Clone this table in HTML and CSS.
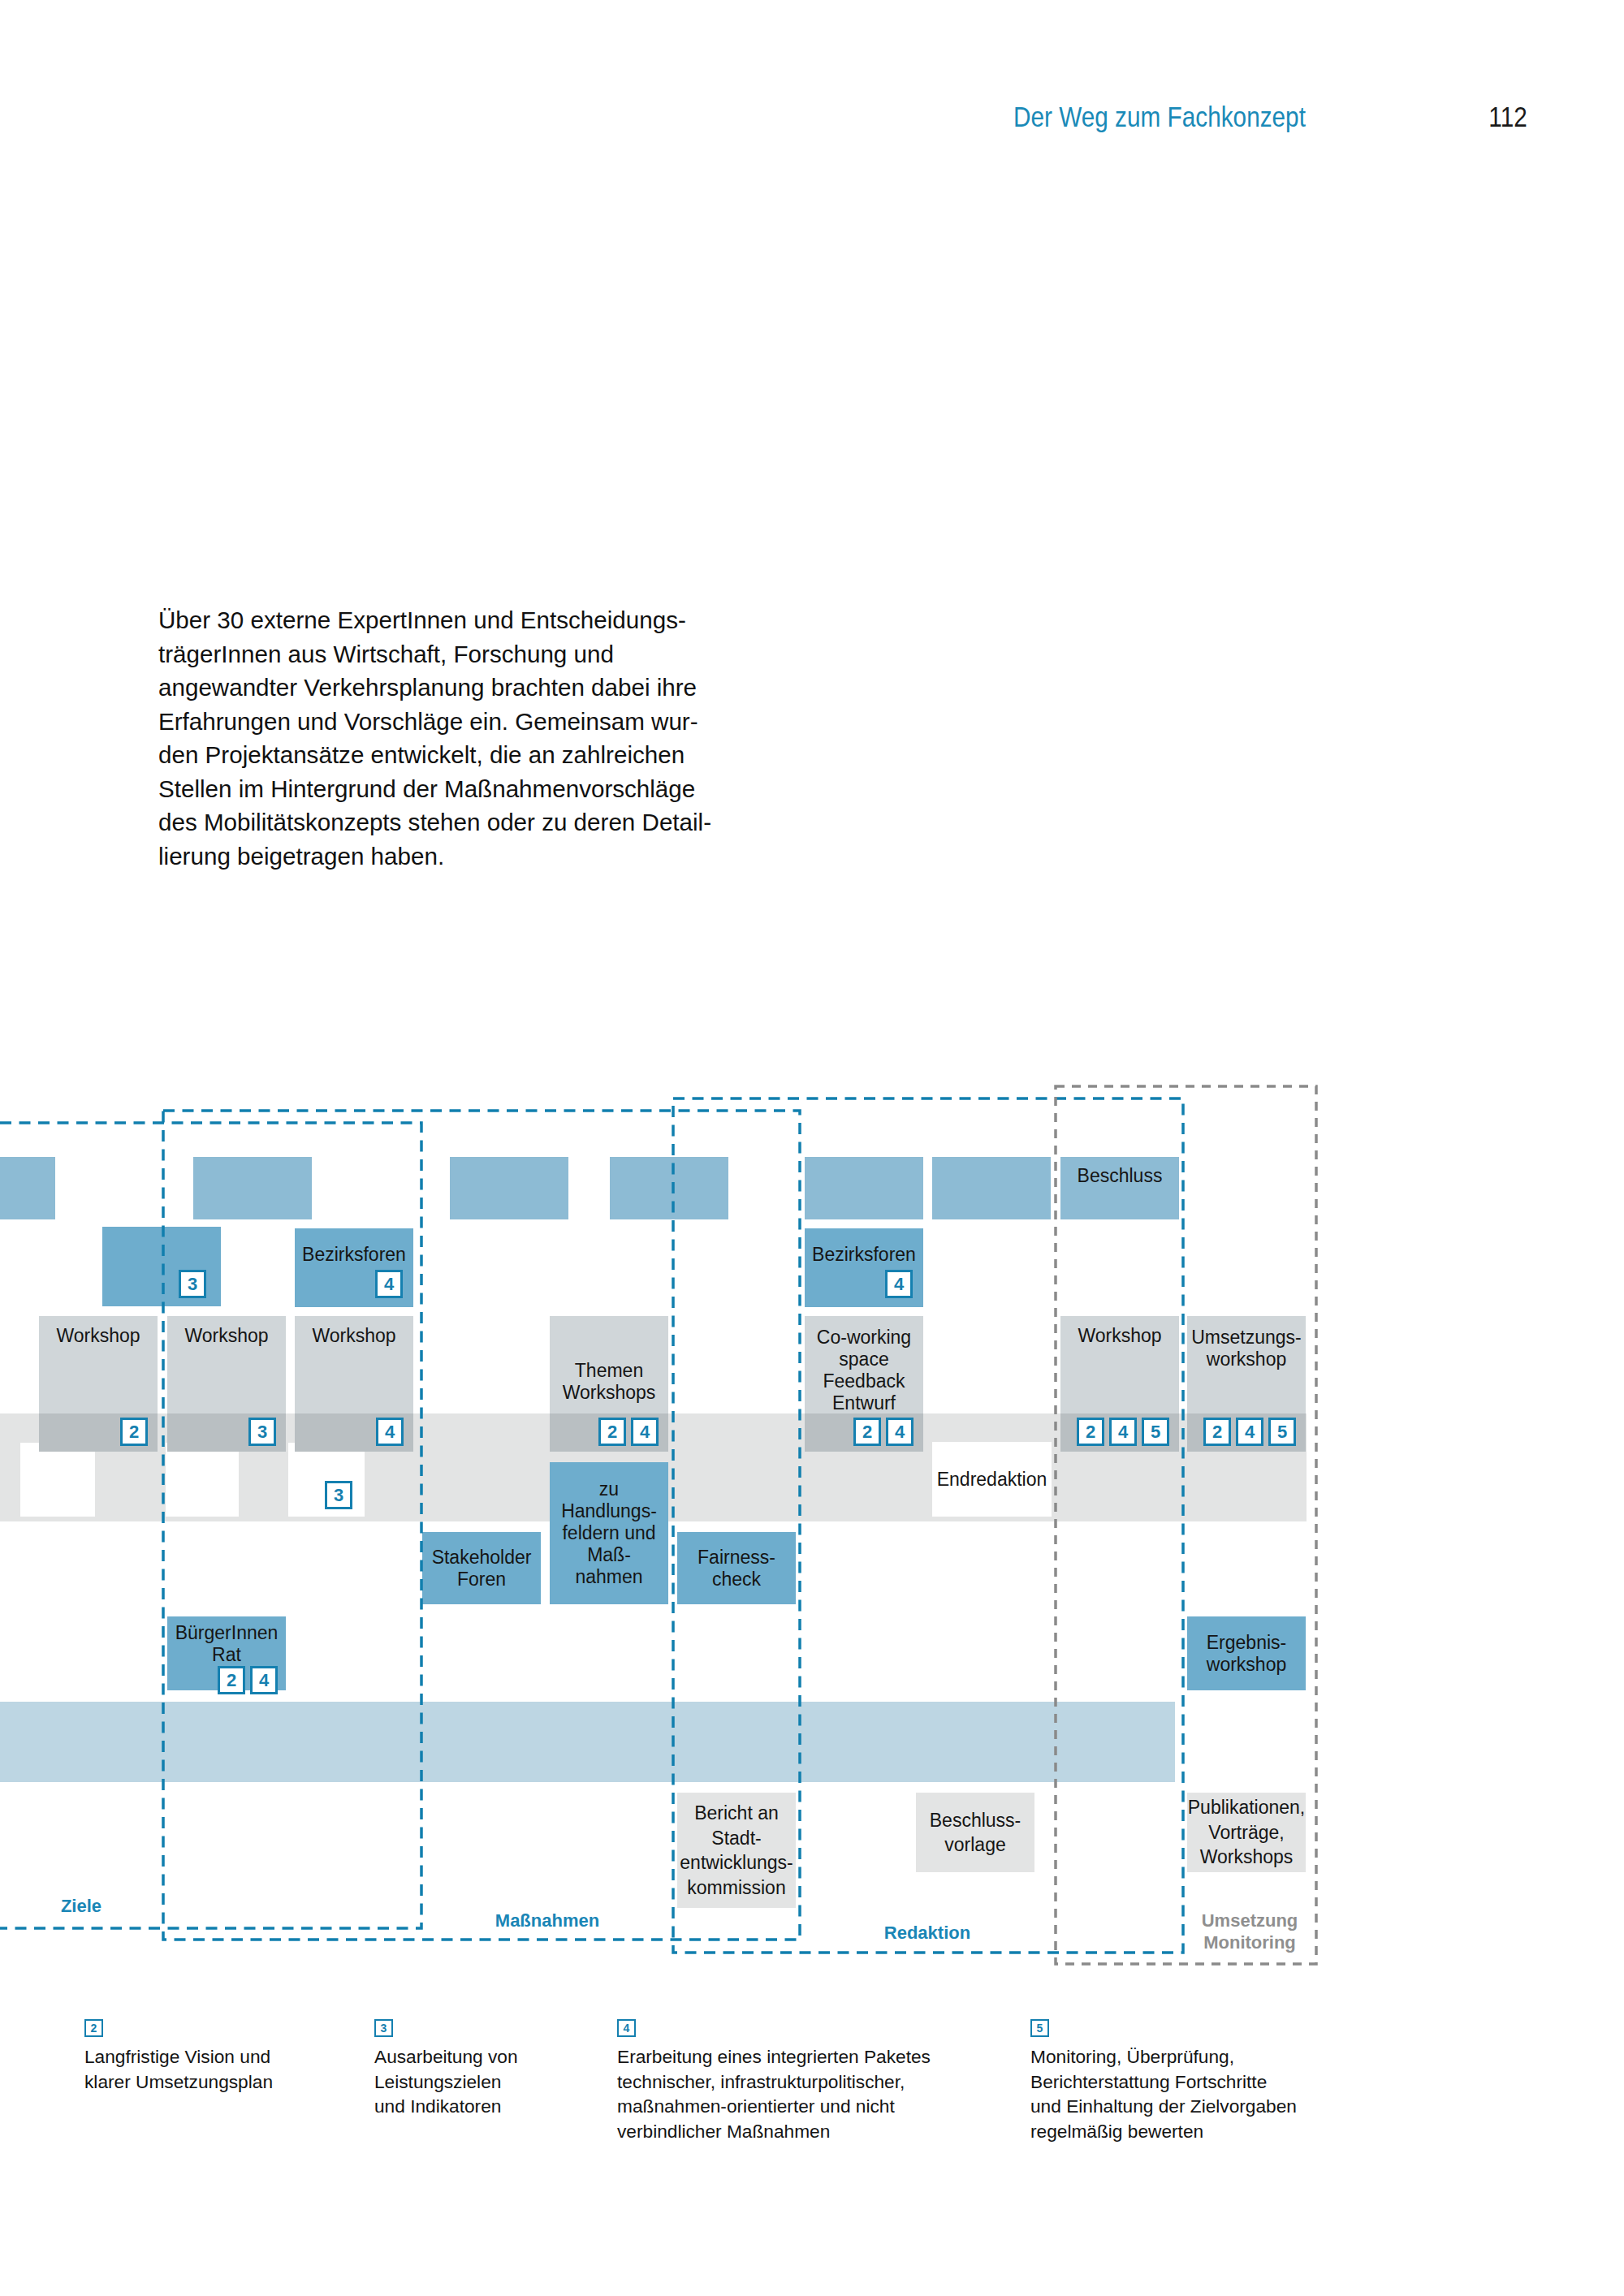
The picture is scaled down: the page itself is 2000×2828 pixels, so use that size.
FILE: index.html
```html
<!DOCTYPE html>
<html lang="de">
<head>
<meta charset="utf-8">
<title>Der Weg zum Fachkonzept – 112</title>
<link rel="stylesheet" href="styles.css">
</head>
<body>
<div class="page">
  <header class="running-head">
    <span class="chapter">Der Weg zum Fachkonzept</span>
    <span class="folio">112</span>
  </header>

  <p class="intro">Über 30 externe ExpertInnen und Entscheidungs-<br>trägerInnen aus Wirtschaft, Forschung und<br>angewandter Verkehrsplanung brachten dabei ihre<br>Erfahrungen und Vorschläge ein. Gemeinsam wur-<br>den Projektansätze entwickelt, die an zahlreichen<br>Stellen im Hintergrund der Maßnahmenvorschläge<br>des Mobilitätskonzepts stehen oder zu deren Detail-<br>lierung beigetragen haben.</p>

  <div class="diagram">
    <div class="band band-grey"></div>
    <div class="band band-blue"></div>

    <!-- top row -->
    <div class="node bar t-a"></div>
    <div class="node bar t-b"></div>
    <div class="node bar t-c"></div>
    <div class="node bar t-d"></div>
    <div class="node bar c6 r-top"></div>
    <div class="node bar c7 r-top"></div>
    <div class="node bar c8 r-top pad-besch"><span>Beschluss</span></div>

    <!-- second row -->
    <div class="node blue m-a"><div class="badges b-mid"><span class="badge">3</span></div></div>
    <div class="node blue c2 r-mid pad-bz"><span>Bezirksforen</span><div class="badges b-bz"><span class="badge">4</span></div></div>
    <div class="node blue c6 r-mid pad-bz"><span>Bezirksforen</span><div class="badges b-bz"><span class="badge">4</span></div></div>

    <!-- white boxes in grey band -->
    <div class="node white w-a"></div>
    <div class="node white w-b"></div>
    <div class="node white w-c"><div class="badges b-white"><span class="badge">3</span></div></div>
    <div class="node white c7 w-end center"><span>Endredaktion</span></div>

    <!-- workshops -->
    <div class="node grey c0 r-ws pad-ws"><span>Workshop</span><div class="badges"><span class="badge">2</span></div></div>
    <div class="node grey c1 r-ws pad-ws"><span>Workshop</span><div class="badges"><span class="badge">3</span></div></div>
    <div class="node grey c2 r-ws pad-ws"><span>Workshop</span><div class="badges"><span class="badge">4</span></div></div>
    <div class="node grey c4 r-ws pad-themen"><span>Themen<br>Workshops</span><div class="badges"><span class="badge">2</span><span class="badge">4</span></div></div>
    <div class="node grey c6 r-ws pad-cw"><span>Co-working<br>space<br>Feedback<br>Entwurf</span><div class="badges b-tight"><span class="badge">2</span><span class="badge">4</span></div></div>
    <div class="node grey c8 r-ws pad-ws"><span>Workshop</span><div class="badges"><span class="badge">2</span><span class="badge">4</span><span class="badge">5</span></div></div>
    <div class="node grey c9 r-ws pad-cw"><span>Umsetzungs-<br>workshop</span><div class="badges"><span class="badge">2</span><span class="badge">4</span><span class="badge">5</span></div></div>

    <!-- blue activity boxes -->
    <div class="node blue c4 r-tall center"><span>zu<br>Handlungs-<br>feldern und<br>Maß-<br>nahmen</span></div>
    <div class="node blue c3 r-act center"><span>Stakeholder<br>Foren</span></div>
    <div class="node blue c5 r-act center"><span>Fairness-<br>check</span></div>
    <div class="node blue c1 r-rat pad-rat"><span>BürgerInnen<br>Rat</span><div class="badges b-rat"><span class="badge">2</span><span class="badge">4</span></div></div>
    <div class="node blue c9 r-rat center"><span>Ergebnis-<br>workshop</span></div>

    <!-- outputs -->
    <div class="node pale c5 r-out r-out-tall center out"><span>Bericht an<br>Stadt-<br>entwicklungs-<br>kommission</span></div>
    <div class="node pale o-besch r-out center out"><span>Beschluss-<br>vorlage</span></div>
    <div class="node pale c9 r-out center out"><span>Publikationen,<br>Vorträge,<br>Workshops</span></div>

    <!-- dashed phase frames -->
    <svg class="frames" width="2000" height="1100" viewBox="0 0 2000 1100" aria-hidden="true">
      <path class="dash-blue" d="M0 53 H519 V1045 H0"/>
      <rect class="dash-blue" x="201" y="38" width="784" height="1021"/>
      <rect class="dash-blue" x="829" y="23" width="628" height="1052"/>
      <rect class="dash-grey" x="1300" y="8" width="321" height="1081"/>
    </svg>

    <span class="phase l-ziele">Ziele</span>
    <span class="phase l-mass">Maßnahmen</span>
    <span class="phase l-red">Redaktion</span>
    <span class="phase phase-grey l-ums">Umsetzung<br>Monitoring</span>
  </div>

  <section class="legend">
    <div class="legend-item">
      <span class="key">2</span>
      <p>Langfristige Vision und<br>klarer Umsetzungsplan</p>
    </div>
    <div class="legend-item">
      <span class="key">3</span>
      <p>Ausarbeitung von<br>Leistungszielen<br>und Indikatoren</p>
    </div>
    <div class="legend-item">
      <span class="key">4</span>
      <p>Erarbeitung eines integrierten Paketes<br>technischer, infrastrukturpolitischer,<br>maßnahmen-orientierter und nicht<br>verbindlicher Maßnahmen</p>
    </div>
    <div class="legend-item">
      <span class="key">5</span>
      <p>Monitoring, Überprüfung,<br>Berichterstattung Fortschritte<br>und Einhaltung der Zielvorgaben<br>regelmäßig bewerten</p>
    </div>
  </section>
</div>
</body>
</html>
```
FILE: styles.css
```css
* { box-sizing: border-box; }

html, body {
  margin: 0;
  padding: 0;
  background: #ffffff;
}

body {
  font-family: "Liberation Sans", Arial, sans-serif;
  color: #141414;
}

.page {
  width: 2000px;
  min-height: 2828px;
  padding-bottom: 1px;
}

/* running head */
.running-head {
  display: flex;
  justify-content: space-between;
  align-items: baseline;
  padding: 124px 119px 0 1248px;
  font-family: "Liberation Sans", Arial, sans-serif;
  font-size: 35px;
  line-height: 40px;
}

.chapter {
  display: inline-block;
  color: #1a8ab8;
  transform: scaleX(0.85);
  transform-origin: left center;
}

.folio {
  display: inline-block;
  color: #1a1a1a;
  transform: scaleX(0.85);
  transform-origin: right center;
}

/* intro text */
.intro {
  margin: 579px 0 0 195px;
  font-size: 29.6px;
  line-height: 41.5px;
  white-space: nowrap;
  color: #111;
}

/* diagram canvas */
.diagram {
  position: relative;
  margin-top: 255px;
  height: 1100px;
  width: 2000px;
  overflow: hidden;
}

.band { position: absolute; left: 0; }
.band-grey { top: 411px; height: 133px; width: 1609px; background: #e3e4e4; }
.band-blue { top: 766px; height: 99px; width: 1447px; background: #bdd6e3; }

.node {
  position: absolute;
  width: 146px;
  display: flex;
  flex-direction: column;
  text-align: center;
  font-size: 23px;
  line-height: 27px;
  color: #151515;
  white-space: nowrap;
}

.node.center { justify-content: center; }

.bar { background: #8dbbd4; }
.blue { background: #6eadcd; }
.white { background: #ffffff; }
.pale { background: #e3e4e4; }
.grey { background: linear-gradient(to bottom, #d0d6d9 0, #d0d6d9 120px, #b9bfc2 120px, #b9bfc2 100%); }

/* columns */
.c0 { left: 48px; }
.c1 { left: 206px; }
.c2 { left: 363px; }
.c3 { left: 520px; }
.c4 { left: 677px; }
.c5 { left: 834px; }
.c6 { left: 991px; }
.c7 { left: 1148px; }
.c8 { left: 1306px; }
.c9 { left: 1462px; }

/* rows */
.r-top { top: 95px; height: 77px; }
.r-mid { top: 183px; height: 97px; }
.r-ws { top: 291px; height: 167px; }
.r-tall { top: 471px; height: 175px; }
.r-act { top: 557px; height: 89px; }
.r-rat { top: 661px; height: 91px; }
.r-out { top: 878px; height: 98px; }
.r-out-tall { height: 142px; }

/* irregular top bars */
.t-a { left: 0; width: 68px; top: 95px; height: 77px; }
.t-b { left: 238px; top: 95px; height: 77px; }
.t-c { left: 554px; top: 95px; height: 77px; }
.t-d { left: 751px; top: 95px; height: 77px; }

.m-a { left: 126px; top: 181px; height: 98px; }

.w-a { left: 25px; width: 92px; top: 447px; height: 91px; }
.w-b { left: 204px; width: 90px; top: 447px; height: 91px; }
.w-c { left: 355px; width: 94px; top: 447px; height: 91px; }
.w-end { width: 147px; top: 446px; height: 92px; }

.o-besch { left: 1128px; }

.out { line-height: 30.5px; }

/* text offsets */
.pad-ws { padding-top: 11px; }
.pad-cw { padding-top: 12.5px; }
.pad-bz { padding-top: 19px; }
.pad-themen { padding-top: 53.5px; }
.pad-besch { padding-top: 9.5px; }
.pad-rat { padding-top: 6.5px; }

/* number badges */
.badges {
  margin-top: auto;
  display: flex;
  justify-content: flex-end;
  gap: 6px;
  padding: 0 12px 7px 0;
}

.b-tight { padding-right: 12px; }
.b-mid { padding: 0 18px 10px 0; }
.b-bz { padding: 0 13px 11px 0; }
.b-white { padding: 0 15px 9px 0; }
.b-rat { padding-right: 10px; margin-bottom: -8px; }

.badge {
  width: 34px;
  height: 35px;
  border: 3px solid #1580b0;
  background: #ffffff;
  color: #1580b0;
  font-weight: bold;
  font-size: 22px;
  line-height: 29px;
  text-align: center;
}

/* phase frames */
.frames {
  position: absolute;
  left: 0;
  top: 0;
  pointer-events: none;
}

.dash-blue {
  fill: none;
  stroke: #117fae;
  stroke-width: 3.5;
  stroke-dasharray: 14 9.5;
}

.dash-grey {
  fill: none;
  stroke: #8a8a8a;
  stroke-width: 3.5;
  stroke-dasharray: 11 9;
}

.phase {
  position: absolute;
  width: 240px;
  text-align: center;
  font-weight: bold;
  font-size: 22px;
  line-height: 27px;
  color: #1a86b6;
}

.phase-grey { color: #8f8f8f; }

.l-ziele { left: -20px; top: 1004px; }
.l-mass { left: 554px; top: 1022px; }
.l-red { left: 1022px; top: 1037px; }
.l-ums { left: 1419px; top: 1022px; }

/* legend */
.legend {
  display: grid;
  grid-template-columns: 357px 299px 509px 1fr;
  margin-top: 57px;
  padding-left: 104px;
}

.legend-item {
  display: flex;
  flex-direction: column;
  align-items: flex-start;
}

.key {
  width: 23px;
  height: 22px;
  border: 2px solid #1580b0;
  color: #1580b0;
  font-weight: bold;
  font-size: 14px;
  line-height: 18px;
  text-align: center;
}

.legend-item p {
  margin: 9px 0 0;
  font-size: 22.7px;
  line-height: 30.7px;
  color: #141414;
  white-space: nowrap;
}
```
